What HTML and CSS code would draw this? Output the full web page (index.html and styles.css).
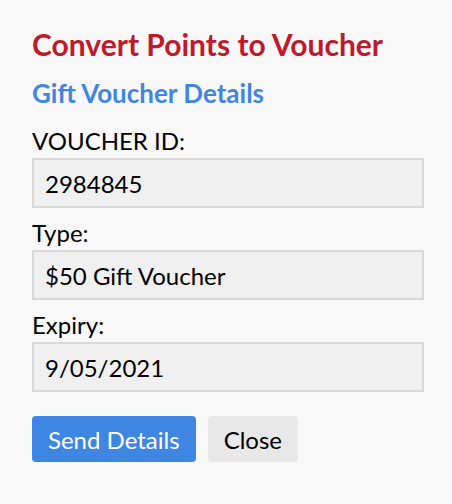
FILE: index.html
```html
<!DOCTYPE html>
<html lang="en">
<head>
    <meta charset="UTF-8">
    <meta name="viewport" content="width=device-width, initial-scale=1.0">
    <title>Convert Points to Voucher</title>
    <link rel="stylesheet" href="styles.css">
</head>
<body>
    <div class="dialog">
        <h1 class="dialog-title">Convert Points to Voucher</h1>
        <h2 class="section-title">Gift Voucher Details</h2>

        <div class="field">
            <label for="voucherId">VOUCHER ID:</label>
            <input id="voucherId" class="field-input" type="text" value="2984845" readonly>
        </div>

        <div class="field">
            <label for="voucherType">Type:</label>
            <input id="voucherType" class="field-input" type="text" value="$50 Gift Voucher" readonly>
        </div>

        <div class="field">
            <label for="voucherExpiry">Expiry:</label>
            <input id="voucherExpiry" class="field-input" type="text" value="9/05/2021" readonly>
        </div>

        <div class="actions">
            <button class="btn btn-primary">Send Details</button>
            <button class="btn btn-secondary">Close</button>
        </div>
    </div>
</body>
</html>
```

FILE: styles.css
```css
* {
    margin: 0;
    padding: 0;
    box-sizing: border-box;
}

body {
    font-family: Lato, 'Noto Sans', sans-serif;
    background: #f8f8f8;
    color: #000;
    min-height: 100vh;
}

.dialog {
    padding: 26px 28px 32px 32px;
}

.dialog-title {
    color: #c1192c;
    font-size: 30px;
    font-weight: 700;
    line-height: 36px;
    margin-bottom: 16px;
}

.section-title {
    color: #3f86e2;
    font-size: 26px;
    font-weight: 700;
    line-height: 31px;
    margin-bottom: 17px;
}

.field {
    display: flex;
    flex-direction: column;
    margin-bottom: 10px;
}

.field label {
    font-size: 24px;
    line-height: 30px;
    margin-bottom: 2px;
}

.field-input {
    width: 100%;
    height: 50px;
    padding: 0 11px;
    font-family: inherit;
    font-size: 24px;
    color: #000;
    background: #f0f0f0;
    border: 2px solid #d8d8d8;
    outline: none;
}

.actions {
    display: flex;
    gap: 12px;
    margin-top: 24px;
}

.btn {
    height: 46px;
    padding: 0 16px;
    font-family: inherit;
    font-size: 24px;
    border: none;
    border-radius: 4px;
    cursor: pointer;
}

.btn-primary {
    background: #3f86e2;
    color: #fff;
}

.btn-secondary {
    background: #e8e8e8;
    color: #000;
}
```
